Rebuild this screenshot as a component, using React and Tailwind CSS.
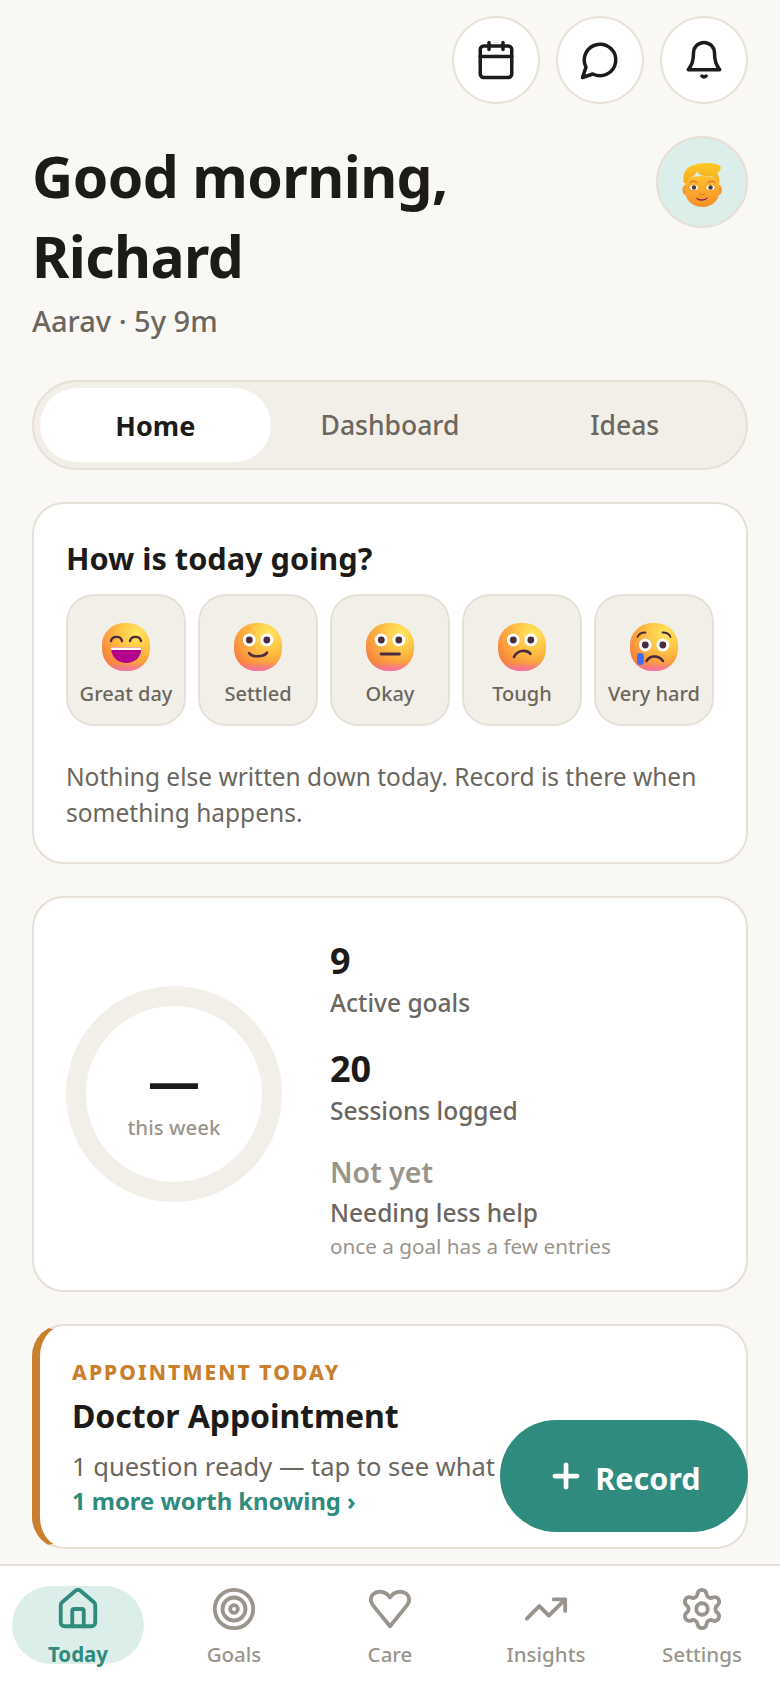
import React from 'react';
import { Calendar, House, Target, TrendingUp, Settings, Plus } from 'lucide-react';

const Eyes = ({ y = 17, r = 6.5, p = 3.4 }) => (
    <>
        <circle cx="15.3" cy={y} r={r} fill="#fff" />
        <circle cx="32.8" cy={y} r={r} fill="#fff" />
        <circle cx="15.3" cy={y} r={p} fill="#4b2c3c" />
        <circle cx="32.8" cy={y} r={p} fill="#4b2c3c" />
    </>
);

const FaceBase = ({ id }) => (
    <>
        <defs>
            <radialGradient id={`${id}-a`} cx="0.72" cy="0.22" r="0.85">
                <stop offset="0" stopColor="#ffe85e" />
                <stop offset="0.45" stopColor="#ffc043" />
                <stop offset="1" stopColor="#f7803c" />
            </radialGradient>
            <linearGradient id={`${id}-b`} x1="0" y1="0.82" x2="0" y2="1">
                <stop offset="0" stopColor="#f272b0" stopOpacity="0" />
                <stop offset="1" stopColor="#f272b0" />
            </linearGradient>
        </defs>
        <rect x="0" y="0" width="48" height="48" rx="22" fill={`url(#${id}-a)`} />
        <rect x="0" y="0" width="48" height="48" rx="22" fill={`url(#${id}-b)`} />
    </>
);

const MoodFace = ({ kind }) => (
    <svg width="48" height="48" viewBox="0 0 48 48" fill="none">
        <FaceBase id={kind} />
        {kind === 'great' && (
            <>
                <path d="M9 18c1-5.500 10-5.500 11 0" stroke="#4b2c3c" strokeWidth="2.400" strokeLinecap="round" />
                <path d="M28 18c1-5.500 10-5.500 11 0" stroke="#4b2c3c" strokeWidth="2.400" strokeLinecap="round" />
                <path d="M9 24.500h30.500c0 9-6 15.500-15.200 15.500S9 33.500 9 24.500z" fill="#b5008f" />
                <path d="M9 24.500h30.500c0 .9-.1 1.700-.2 2.500H9.200c-.1-.8-.2-1.600-.2-2.500z" fill="#fff" />
            </>
        )}
        {kind === 'settled' && (
            <>
                <Eyes />
                <path d="M15 30c3 4.500 15 4.500 18-.5" stroke="#4b2c3c" strokeWidth="2.500" strokeLinecap="round" />
            </>
        )}
        {kind === 'okay' && (
            <>
                <Eyes />
                <path d="M15 31h18.500" stroke="#4b2c3c" strokeWidth="2.800" strokeLinecap="round" />
            </>
        )}
        {kind === 'tough' && (
            <>
                <Eyes />
                <path d="M16 34c3-7 13-8 16.500-3" stroke="#4b2c3c" strokeWidth="2.600" strokeLinecap="round" />
            </>
        )}
        {kind === 'hard' && (
            <>
                <path d="M7.500 14c1-3 4.500-4.500 8-4.500" stroke="#4b2c3c" strokeWidth="1.800" strokeLinecap="round" />
                <path d="M40.500 14c-1-3-4.500-4.500-8-4.500" stroke="#4b2c3c" strokeWidth="1.800" strokeLinecap="round" />
                <Eyes y={22} r={6.400} p={3.400} />
                <path d="M16.500 38c3.500-6 12-6 16.500 0" stroke="#4b2c3c" strokeWidth="2.600" strokeLinecap="round" />
                <rect x="7" y="30" width="6.800" height="12" rx="3.400" fill="#3f6cf0" />
            </>
        )}
    </svg>
);

// the little blond face in the avatar bubble
const BoyFace = () => (
    <svg width="40" height="46" viewBox="0 0 40 46" fill="none">
        <defs>
            <linearGradient id="boy-skin" x1="0" y1="0" x2="0" y2="1">
                <stop offset="0" stopColor="#ffc02e" />
                <stop offset="1" stopColor="#f58e2c" />
            </linearGradient>
            <linearGradient id="boy-hair" x1="0" y1="0" x2="0" y2="1">
                <stop offset="0" stopColor="#ffc926" />
                <stop offset="1" stopColor="#f5a81c" />
            </linearGradient>
        </defs>
        <ellipse cx="3.500" cy="28" rx="3" ry="5" fill="#f59a2c" />
        <ellipse cx="37" cy="28" rx="3" ry="5" fill="#f59a2c" />
        <path d="M3.500 22C3.500 17 9 14 20.500 14S37 17 37 22v9c0 8-8 14-16.500 14S3.500 39 3.500 31z" fill="url(#boy-skin)" />
        <path d="M2 21C0 13 3 5 12 3 16 1 26 0 34 2c4 1 6 3 4 6-1 2-2 3-3 3 2 3 3 7 2 11-2-5-5-8-10-8-5 0-10 0-12-5-1 5-7 6-9 9-1 2-2 4-4 3z" fill="url(#boy-hair)" />
        <path d="M8 20.500c2-1.500 5-1.500 7 0M26 20.500c2-1.500 5-1.500 7 0" stroke="#e2793a" strokeWidth="1.400" strokeLinecap="round" />
        <ellipse cx="12" cy="25.500" rx="4" ry="2.600" fill="#fff" />
        <ellipse cx="28.500" cy="25.500" rx="4" ry="2.600" fill="#fff" />
        <circle cx="12" cy="25.500" r="2.200" fill="#4b3a3a" />
        <circle cx="28.500" cy="25.500" r="2.200" fill="#4b3a3a" />
        <path d="M18 31.500c1 1.500 3.500 1.500 4.500 0" stroke="#e67e28" strokeWidth="1.200" strokeLinecap="round" />
        <path d="M14 35.500c3 2.500 9 2.500 12-.5-1 4.500-11 5-12 .5z" fill="#8a0f5c" />
    </svg>
);

const HeartIcon = () => (
    <svg width="46" height="46" viewBox="0 0 24 24" fill="none" stroke="currentColor" strokeWidth="2" strokeLinecap="round" strokeLinejoin="round" className="shrink-0">
        <path d="M12 21l-7.800-9.600C2.700 9.700 2 8.500 2 7.200 2 4.600 4.100 3 6.700 3 8.800 3 10.800 4.100 12 6c1.200-1.900 3.200-3 5.300-3C19.900 3 22 4.600 22 7.200c0 1.300-.7 2.500-2.200 4.200z" />
    </svg>
);

const BubbleIcon = () => (
    <svg width="42" height="42" viewBox="0 0 24 24" fill="none" stroke="currentColor" strokeWidth="2" strokeLinecap="round" strokeLinejoin="round">
        <path d="M7.900 20A9 9 0 1 0 4 16.100L2 22Z" />
    </svg>
);

const BellIcon = () => (
    <svg width="42" height="42" viewBox="0 0 24 24" fill="none" stroke="currentColor" strokeWidth="2" strokeLinecap="round" strokeLinejoin="round">
        <path d="M6 8a6 6 0 0 1 12 0c0 5 1.200 7.500 3 9.500H3c1.800-2 3-4.500 3-9.500z" />
        <path d="M10.800 21.200c.7.700 1.700.7 2.400 0" />
    </svg>
);

const moods = [
    { kind: 'great', label: 'Great day' },
    { kind: 'settled', label: 'Settled' },
    { kind: 'okay', label: 'Okay' },
    { kind: 'tough', label: 'Tough' },
    { kind: 'hard', label: 'Very hard' },
];

const navItems = [
    { label: 'Goals', icon: <Target size={46} strokeWidth={2} className="shrink-0" /> },
    { label: 'Care', icon: <HeartIcon /> },
    { label: 'Insights', icon: <TrendingUp size={46} strokeWidth={2} className="shrink-0" /> },
    { label: 'Settings', icon: <Settings size={46} strokeWidth={2} className="shrink-0" /> },
];

const RoundButton = ({ children }) => (
    <button className="w-[88px] h-[88px] rounded-full bg-white border-2 border-[#e6e0d7] flex items-center justify-center text-[#1c1b19]">
        {children}
    </button>
);

const App = () => {
    return (
        <div className="relative w-[780px] h-[1688px] overflow-hidden flex flex-col bg-[#faf8f5] font-['Noto_Sans',sans-serif]">
            <div className="flex-1 min-h-0 overflow-hidden px-8 pt-4">
                <div className="flex justify-end gap-4">
                    <RoundButton><Calendar size={42} strokeWidth={2} /></RoundButton>
                    <RoundButton><BubbleIcon /></RoundButton>
                    <RoundButton><BellIcon /></RoundButton>
                </div>

                <div className="flex justify-between mt-8">
                    <div>
                        <h1 className="text-[57px] leading-[80px] font-bold text-[#1c1b19] tracking-[-0.600px]">
                            Good morning,<br />Richard
                        </h1>
                        <p className="text-[29px] leading-[40px] font-medium text-[#6b665e] mt-[5px]">Aarav · 5y 9m</p>
                    </div>
                    <div className="w-[92px] h-[92px] pt-[5px] rounded-full bg-[#dceee9] border-2 border-[#e6e0d7] flex items-center justify-center">
                        <BoyFace />
                    </div>
                </div>

                <div className="mt-[39px] h-[90px] rounded-full bg-[#f2efe9] border-2 border-[#e6e0d7] p-[6px] flex gap-1">
                    <button className="flex-1 rounded-full bg-white pt-[2px] text-[27px] font-bold text-[#1c1b19]">Home</button>
                    <button className="flex-1 rounded-full pt-[2px] text-[26.500px] font-medium text-[#6b665e]">Dashboard</button>
                    <button className="flex-1 rounded-full pt-[2px] text-[26.500px] font-medium text-[#6b665e]">Ideas</button>
                </div>

                <section className="mt-8 h-[362px] bg-white rounded-[32px] border-2 border-[#e6e0d7] px-8 pt-8">
                    <h2 className="text-[30.700px] leading-[44px] font-bold text-[#1c1b19]">How is today going?</h2>
                    <div className="mt-[14px] grid grid-cols-5 gap-3">
                        {moods.map((m) => (
                            <button key={m.kind} className="h-[132px] rounded-[28px] bg-[#f2efe9] border-2 border-[#e6e0d7] flex flex-col items-center pt-[27px]">
                                <MoodFace kind={m.kind} />
                                <span className="mt-2 text-[20px] leading-[30px] font-medium text-[#6b665e] whitespace-nowrap">{m.label}</span>
                            </button>
                        ))}
                    </div>
                    <p className="mt-[33px] text-[24.500px] leading-[36px] text-[#6b665e]">
                        Nothing else written down today. Record is there when something happens.
                    </p>
                </section>

                <section className="mt-8 h-[396px] bg-white rounded-[32px] border-2 border-[#e6e0d7] px-8 flex items-center gap-12">
                    <div className="shrink-0 w-[216px] h-[216px] rounded-full border-[20px] border-[#f2efe9] flex flex-col items-center justify-center pt-[6px]">
                        <span className="text-[52px] leading-[56px] font-bold text-[#1c1b19]">—</span>
                        <span className="mt-1 text-[20.500px] leading-[30px] text-[#9a958c] font-medium">this week</span>
                    </div>
                    <div className="flex flex-col pt-[9px]">
                        <div className="text-[36px] leading-[48px] font-bold text-[#1c1b19]">9</div>
                        <div className="text-[24.500px] leading-[36px] font-[550] text-[#6b665e]">Active goals</div>
                        <div className="mt-6 text-[36px] leading-[48px] font-bold text-[#1c1b19]">20</div>
                        <div className="text-[24.500px] leading-[36px] font-[550] text-[#6b665e]">Sessions logged</div>
                        <div className="mt-[22px] text-[28.500px] leading-[42px] font-semibold text-[#9a958c]">Not yet</div>
                        <div className="mt-[2px] text-[24.500px] leading-[36px] font-[550] text-[#6b665e]">Needing less help</div>
                        <div className="text-[20.700px] leading-[30px] text-[#9a958c]">once a goal has a few entries</div>
                    </div>
                </section>

                <section className="mt-8 h-[225px] bg-white rounded-[32px] border-2 border-l-8 border-[#e6e0d7] border-l-[#c9802e] pl-8 pt-[26px]">
                    <div className="text-[21px] leading-[40px] font-extrabold text-[#c9802e] tracking-[2.050px]">APPOINTMENT TODAY</div>
                    <div className="mt-[2px] text-[32px] leading-[44px] font-bold text-[#1c1b19] tracking-[-0.100px]">Doctor Appointment</div>
                    <div className="mt-[10px] text-[25.500px] leading-[36px] text-[#6b665e]">1 question ready — tap to see what</div>
                    <div className="text-[23.800px] leading-[34px] font-bold text-[#2e8b7d]">1 more worth knowing ›</div>
                </section>
            </div>

            <button className="absolute left-[500px] top-[1420px] w-[248px] h-[112px] rounded-[56px] bg-[#2e8b7d] text-white flex items-center justify-center gap-[10px] text-[30.500px] font-bold">
                <Plus size={38} strokeWidth={3} />
                <span className="mt-[5px]">Record</span>
            </button>

            <nav className="shrink-0 h-[124px] bg-white border-t-2 border-[#e6e0d7] grid grid-cols-5 pt-5">
                <div className="flex justify-center">
                    <button className="w-[132px] h-[78px] rounded-[39px] bg-[#dceee9] flex flex-col items-center text-[#2e8b7d]">
                        <House size={46} strokeWidth={2} className="shrink-0" />
                        <span className="mt-[7px] text-[20.500px] leading-[30px] font-bold">Today</span>
                    </button>
                </div>
                {navItems.map((n) => (
                    <div key={n.label} className="flex justify-center">
                        <button className="h-[78px] flex flex-col items-center text-[#9a958c]">
                            {n.icon}
                            <span className="mt-[7px] text-[20.500px] leading-[30px] font-medium">{n.label}</span>
                        </button>
                    </div>
                ))}
            </nav>
        </div>
    );
};

export default App;
